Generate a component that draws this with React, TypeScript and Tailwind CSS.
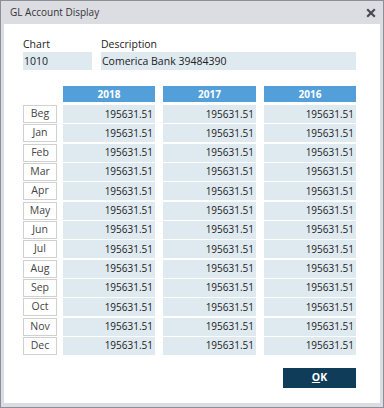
import React from 'react';

const months = ['Beg', 'Jan', 'Feb', 'Mar', 'Apr', 'May', 'Jun', 'Jul', 'Aug', 'Sep', 'Oct', 'Nov', 'Dec'];
const years = [
  { year: '2018', width: 'w-[92px]' },
  { year: '2017', width: 'w-[93px]' },
  { year: '2016', width: 'w-[92px]' },
];

export default function App() {
  return (
    <div className="w-[384px] h-[408px] bg-[#dcdce3] border border-[#8e8e98] flex flex-col font-['Open_Sans',sans-serif] text-[10px] text-[#222]">
      {/* title bar */}
      <div className="h-[23px] flex items-center justify-between pl-[9px] pr-[7px]">
        <span className="text-[10px] text-[#333]">GL Account Display</span>
        <svg width="10" height="10" viewBox="0 0 10 10" className="mt-[1px]">
          <path d="M1.2 1.2 L8.8 8.8 M8.8 1.2 L1.2 8.8" stroke="#4a4a55" strokeWidth="2.2" />
        </svg>
      </div>

      <div className="flex-1 mx-[3px] mb-[4px] bg-white pl-[19px] pr-[24px] pt-[12px] flex flex-col">
        {/* chart + description */}
        <div className="flex gap-[9px]">
          <div className="flex flex-col w-[69px]">
            <span className="h-[16px] leading-[16px] text-[10.5px]">Chart</span>
            <div className="h-[18px] bg-[#dfe9f0] pl-[1px] leading-[18px] text-[10.5px]">1010</div>
          </div>
          <div className="flex flex-col flex-1">
            <span className="h-[16px] leading-[16px] text-[10.5px]">Description</span>
            <div className="h-[18px] bg-[#dfe9f0] pl-[1px] leading-[18px] text-[10.5px]">Comerica Bank 39484390</div>
          </div>
        </div>

        {/* balances */}
        <div className="flex mt-[16px]">
          <div className="w-[34px] mr-[6px] flex flex-col pt-[19px] gap-[1.33px]">
            {months.map(m => (
              <div key={m} className="h-[18px] border border-[#d0d0d0] bg-white text-[#444] text-[10.5px] flex items-center justify-center">
                {m}
              </div>
            ))}
          </div>
          <div className="flex gap-[8px]">
            {years.map(y => (
              <div key={y.year} className={`${y.width} flex flex-col`}>
                <div className="h-[16px] mb-[3px] bg-[#529fd9] text-white font-bold flex items-center justify-center">
                  {y.year}
                </div>
                <div className="flex flex-col gap-[1.33px]">
                  {months.map(m => (
                    <div key={m} className="h-[18px] bg-[#dfe9f0] flex items-center justify-end pr-[2px]">
                      195631.51
                    </div>
                  ))}
                </div>
              </div>
            ))}
          </div>
        </div>

        <div className="flex justify-end mt-[13px]">
          <button className="w-[73px] h-[20px] bg-[#0f3c58] text-white font-bold text-[10.5px] flex items-center justify-center">
            <span><span className="underline">O</span>K</span>
          </button>
        </div>
      </div>
    </div>
  );
}
